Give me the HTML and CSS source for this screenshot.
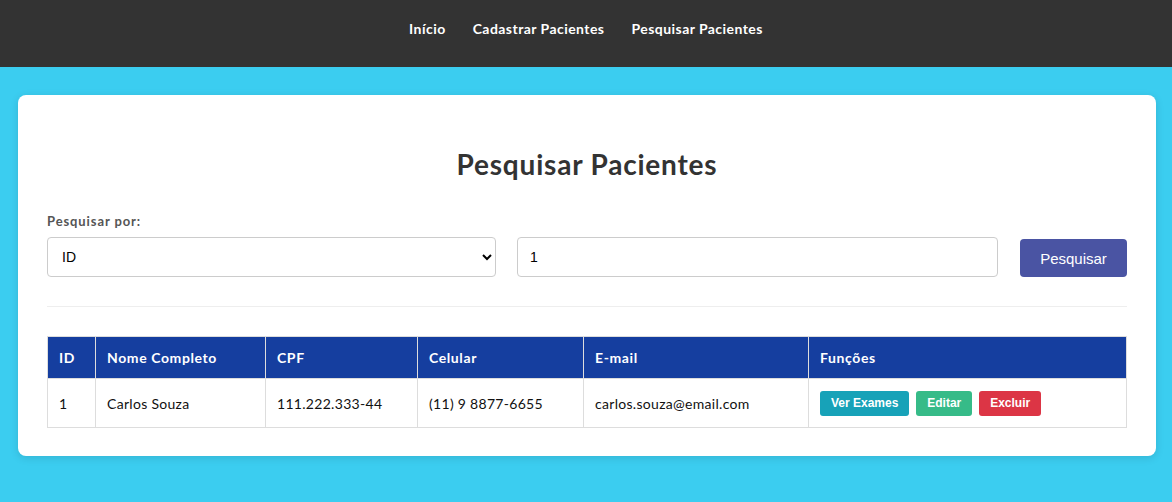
FILE: index.html
```html
<!DOCTYPE html>
<html lang="pt-BR">
<head>
<meta charset="utf-8">
<title>Pesquisar Pacientes</title>
<link rel="stylesheet" href="styles.css">
</head>
<body>
<nav class="topnav">
  <a href="#">Início</a>
  <a href="#">Cadastrar Pacientes</a>
  <a href="#">Pesquisar Pacientes</a>
</nav>
<main class="page">
  <section class="card">
    <h1 class="title">Pesquisar Pacientes</h1>
    <form class="search">
      <div class="field field-select">
        <label class="label" for="tipo">Pesquisar por:</label>
        <select id="tipo" class="control">
          <option>ID</option>
          <option>Nome</option>
          <option>CPF</option>
        </select>
      </div>
      <div class="field field-input">
        <input class="control" type="text" value="1">
      </div>
      <button type="button" class="btn-search">Pesquisar</button>
    </form>
    <hr class="divider">
    <table class="results">
      <colgroup>
        <col class="c-id"><col class="c-nome"><col class="c-cpf"><col class="c-cel"><col class="c-mail"><col class="c-fn">
      </colgroup>
      <thead>
        <tr><th>ID</th><th>Nome Completo</th><th>CPF</th><th>Celular</th><th>E-mail</th><th>Funções</th></tr>
      </thead>
      <tbody>
        <tr>
          <td>1</td>
          <td>Carlos Souza</td>
          <td>111.222.333-44</td>
          <td>(11) 9 8877-6655</td>
          <td>carlos.souza@email.com</td>
          <td class="actions">
            <button type="button" class="btn btn-info">Ver Exames</button>
            <button type="button" class="btn btn-edit">Editar</button>
            <button type="button" class="btn btn-del">Excluir</button>
          </td>
        </tr>
      </tbody>
    </table>
  </section>
</main>
</body>
</html>
```
FILE: styles.css
```css
* { box-sizing: border-box; }
html, body { margin: 0; padding: 0; }
body {
  background: #3bcdf0;
  font-family: Lato, "Open Sans", sans-serif;
  color: #333;
  min-height: 502px;
}
.topnav {
  background: #333333;
  height: 67px;
  display: flex;
  justify-content: center;
  align-items: center;
  gap: 27px;
  padding-bottom: 10px;
}
.topnav a {
  color: #fff;
  text-decoration: none;
  font-weight: 700;
  font-size: 14px;
  letter-spacing: 0.45px;
}
.page {
  padding: 28px 16px 40px 18px;
}
.card {
  background: #fff;
  border-radius: 8px;
  box-shadow: 0 2px 8px rgba(0,0,0,0.12);
  padding: 29px 29px 28px;
  width: 1138px;
}
.title {
  margin: 22px 0 30px;
  text-align: center;
  font-size: 28px;
  font-weight: 700;
  line-height: 37px;
  letter-spacing: 0.8px;
  color: #333;
}
.search {
  display: flex;
  align-items: flex-end;
}
.field { display: flex; flex-direction: column; }
.field-select { width: 449px; margin-right: 21px; }
.field-input { width: 481px; margin-right: 22px; }
.label {
  font-size: 13px;
  font-weight: 700;
  color: #555;
  margin-bottom: 8px;
  line-height: 16px;
  letter-spacing: 0.9px;
}
.control {
  height: 40px;
  border: 1px solid #ccc;
  border-radius: 4px;
  font-family: "Liberation Sans", Arial, sans-serif;
  font-size: 14px;
  color: #000;
  background: #fff;
  padding: 0 12px;
  width: 100%;
}
select.control { padding-left: 10px; }
.btn-search {
  width: 107px;
  height: 38px;
  background: #4a54a3;
  color: #fff;
  border: none;
  border-radius: 4px;
  font-family: "Liberation Sans", Arial, sans-serif;
  font-size: 15px;
}
.divider {
  border: none;
  border-top: 1px solid #eee;
  margin: 29px 0 29px;
}
.results {
  width: 100%;
  border-collapse: collapse;
  table-layout: fixed;
  font-size: 14px;
}
.c-id { width: 48px; }
.c-nome { width: 170px; }
.c-cpf { width: 152px; }
.c-cel { width: 166px; }
.c-mail { width: 225px; }
.results th, .results td {
  border: 1px solid #ddd;
  text-align: left;
  padding: 0 11px;
}
.results th {
  background: #153e9f;
  color: #fff;
  font-weight: 700;
  height: 42px;
  letter-spacing: 0.6px;
}
.results td {
  height: 49px;
  color: #111;
  letter-spacing: 0.3px;
}
.actions { white-space: nowrap; letter-spacing: 0; }
.btn {
  font-family: "Liberation Sans", Arial, sans-serif;
  font-weight: 700;
  font-size: 12px;
  color: #fff;
  border: none;
  border-radius: 3px;
  height: 25px;
  padding: 0 11px;
  margin-right: 3px;
}
.btn-info { background: #17a2b8; }
.btn-edit { background: #36bb88; }
.btn-del { background: #dc3545; }
```
